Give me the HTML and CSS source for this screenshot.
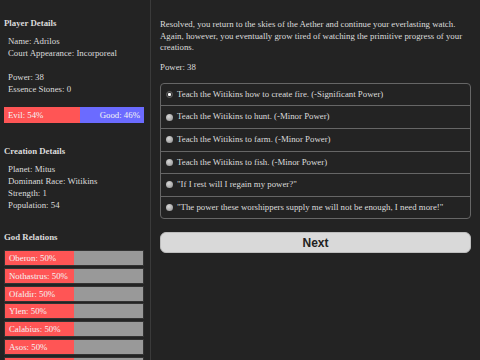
FILE: index.html
```html
<!DOCTYPE html>
<html lang="en">
<head>
    <meta charset="UTF-8">
    <meta name="viewport" content="width=device-width, initial-scale=1.0">
    <title>Aether</title>
    <link rel="stylesheet" href="styles.css">
</head>
<body>
    <div class="sidebar">
        <h3>Player Details</h3>
        <div class="info">
            <p>Name: Adrilos</p>
            <p>Court Appearance: Incorporeal</p>
        </div>
        <div class="info gap">
            <p>Power: 38</p>
            <p>Essence Stones: 0</p>
        </div>
        <div class="alignment">
            <div class="evil" style="width: 54%">Evil: 54%</div>
            <div class="good">Good: 46%</div>
        </div>

        <h3 class="section">Creation Details</h3>
        <div class="info">
            <p>Planet: Mitus</p>
            <p>Dominant Race: Witikins</p>
            <p>Strength: 1</p>
            <p>Population: 54</p>
        </div>

        <h3 class="section relations-title">God Relations</h3>
        <div class="relations">
            <div class="relation"><div class="fill" style="width: 50%">Oberon: 50%</div></div>
            <div class="relation"><div class="fill" style="width: 50%">Nothastrus: 50%</div></div>
            <div class="relation"><div class="fill" style="width: 50%">Ofaldir: 50%</div></div>
            <div class="relation"><div class="fill" style="width: 50%">Ylen: 50%</div></div>
            <div class="relation"><div class="fill" style="width: 50%">Calabius: 50%</div></div>
            <div class="relation"><div class="fill" style="width: 50%">Asos: 50%</div></div>
            <div class="relation"><div class="fill" style="width: 50%"></div></div>
        </div>
    </div>

    <div class="main">
        <p class="story">Resolved, you return to the skies of the Aether and continue your everlasting watch. Again, however, you eventually grow tired of watching the primitive progress of your creations.</p>
        <p class="power">Power: 38</p>

        <div class="choices">
            <label class="choice"><span class="radio checked"></span>Teach the Witikins how to create fire. (-Significant Power)</label>
            <label class="choice"><span class="radio"></span>Teach the Witikins to hunt. (-Minor Power)</label>
            <label class="choice"><span class="radio"></span>Teach the Witikins to farm. (-Minor Power)</label>
            <label class="choice"><span class="radio"></span>Teach the Witikins to fish. (-Minor Power)</label>
            <label class="choice"><span class="radio"></span>"If I rest will I regain my power?"</label>
            <label class="choice"><span class="radio"></span>"The power these worshippers supply me will not be enough, I need more!"</label>
        </div>

        <button class="next">Next</button>
    </div>
</body>
</html>
```

FILE: styles.css
```css
body {
    margin: 0;
    display: flex;
    height: 360px;
    overflow: hidden;
    background-color: #232323;
    color: #dcdcdc;
    font-family: "Liberation Serif", serif;
    font-size: 8.8px;
}
p {
    margin: 0;
}
.sidebar {
    width: 146px;
    padding: 17px 0 0 4px;
    border-right: 1px solid #3a3a3a;
    line-height: 12px;
}
h3 {
    margin: 0;
    font-size: 8.8px;
    line-height: 12px;
}
.info {
    margin: 6px 0 0 4px;
}
.info.gap {
    margin-top: 12px;
}
.alignment {
    display: flex;
    width: 140px;
    height: 16px;
    margin-top: 12px;
    line-height: 16px;
    color: #f4f4f4;
}
.evil {
    background-color: #ff5555;
    padding-left: 4px;
    box-sizing: border-box;
}
.good {
    flex: 1;
    background-color: #6b6bff;
    text-align: right;
    padding-right: 4px;
}
.section {
    margin-top: 22px;
}
.relations-title {
    margin-top: 20px;
}
.relations {
    display: flex;
    flex-direction: column;
    gap: 1.8px;
    margin-top: 7px;
}
.relation {
    width: 138px;
    height: 14px;
    flex-shrink: 0;
    border: 1px solid #333;
    background-color: #999;
    line-height: 14px;
    color: #f4f4f4;
}
.relation .fill {
    height: 100%;
    background-color: #ff5555;
    padding-left: 4px;
    box-sizing: border-box;
    white-space: nowrap;
}
.main {
    flex: 1;
    padding: 19px 9px 0 9px;
    line-height: 11.7px;
}
.power {
    margin-top: 8px;
}
.choices {
    margin-top: 9px;
    border: 1px solid #666;
    border-radius: 4px;
}
.choice {
    display: flex;
    align-items: center;
    height: 21.6px;
    padding-left: 5px;
    border-top: 1px solid #666;
}
.choice:first-child {
    border-top: none;
}
.radio {
    width: 7px;
    height: 7px;
    margin-right: 4px;
    border-radius: 50%;
    background: radial-gradient(circle at 40% 35%, #d8d8d8, #8c8c8c);
}
.radio.checked {
    width: 5px;
    height: 5px;
    border: 1px solid #666;
    background: radial-gradient(circle, #fff 0 1.3px, #333 1.7px);
}
.next {
    display: block;
    width: 100%;
    height: 21px;
    margin-top: 13px;
    border: 1px solid #bdbdbd;
    border-radius: 6px;
    background-color: #d9d9d9;
    color: #222;
    font-family: "Liberation Sans", sans-serif;
    font-size: 12px;
    font-weight: bold;
}
```
